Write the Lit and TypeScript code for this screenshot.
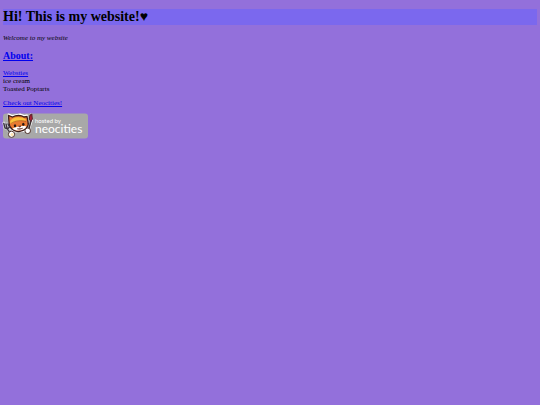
import { LitElement, html, css } from "lit";
import { customElement } from "lit/decorators.js";

@customElement("neocities-badge")
class NeocitiesBadge extends LitElement {
  static styles = css`
    :host { display: block; }
    svg { display: block; width: 85px; height: 26px; overflow: visible; }
    text { font-family: Lato, "Open Sans", sans-serif; fill: #fff; }
    .small { font-size: 6px; }
    .name { font-size: 12px; }
  `;
  render() {
    return html`
      <svg viewBox="0 0 85 26" role="img" aria-label="Hosted by Neocities">
        <rect x="0" y="0.5" width="85" height="25" rx="3" fill="#a8a8a8" />
        <g stroke="#fff" stroke-width="2" stroke-linejoin="round" stroke-linecap="round" fill="#fff">
          <path d="M6 9 L5.5 1.5 L9 3 L17 1.5 L21 3 L24 2.5 L25 12 L21 18 L11 18.5 L7 15 Z" />
          <path d="M28 1.5 L29 7 L26 16" />
        </g>
        <path d="M0.8 10 L2 15 L5 16 L7 14 L5 11 M3 11 L4.5 16 L8 21" fill="none" stroke="#dcdce2" stroke-width="2.8" stroke-linecap="round" />
        <path d="M6 10 L5.5 2.5 L9.5 4 C13 2 18 2 21 4 L24 3.5 L25 9 C26.5 13 22 18 16 18.5 C11 19 6 15 6 10Z" fill="#e87a31" stroke="#3b1c18" stroke-width="1.3" />
        <path d="M7 9 C8 4 18 2.5 23 6.5 L22.5 8 C18 7 11 8 8 11Z" fill="#fbc23c" />
        <path d="M8 10.5 C12 7.5 18 7 23 8.5" fill="none" stroke="#a8571f" stroke-width="0.7" />
        <path d="M9.5 15.5 C13 13.5 20 12.5 23.5 13.5 C21.5 18 13 19 9.5 15.5Z" fill="#fff" />
        <ellipse cx="12" cy="12.8" rx="1.2" ry="1.5" fill="#281815" />
        <ellipse cx="20.3" cy="11.2" rx="1.2" ry="1.5" fill="#281815" />
        <path d="M15.5 13.2 L18 12.8 L17 14.2Z M14 15.8 Q17 17.2 20 15" fill="#643126" stroke="#643126" stroke-width="0.6" />
        <path d="M0.8 10.5 L2 15 L4.5 16 L6.5 14 L5 11 M3 11 L4.2 15.8 L8 21" fill="none" stroke="#3c3540" stroke-width="1.4" stroke-linecap="round" />
        <path d="M28 8 L25.8 16" fill="none" stroke="#3c3030" stroke-width="1.5" />
        <path d="M27 2 L28.8 1 L29.4 6 L28 8.5 L26.3 6Z" fill="#b32036" stroke="#4b2028" stroke-width="1" />
        <circle cx="8.5" cy="21.3" r="3.1" fill="#fff" stroke="#51362e" stroke-width="1" />
        <circle cx="9" cy="21.6" r="1.5" fill="#ffe4b2" />
        <circle cx="24.7" cy="17.8" r="2.8" fill="#fff" stroke="#51362e" stroke-width="1" />
        <text class="small" x="32" y="10">hosted by</text>
        <text class="name" x="32" y="20">neocities</text>
      </svg>
    `;
  }
}

@customElement("app-root")
class AppRoot extends LitElement {
  static styles = css`
    :host {
      display: block;
      box-sizing: border-box;
      min-height: 100vh;
      padding: 9px 3px;
      background: #9370db;
      color: #000;
      font: 7px/8px "Liberation Serif", "Times New Roman", serif;
    }
    h1, h2, p { margin: 0; }
    h1 { background: #7b68ee; font-size: 14px; line-height: 16px; }
    h2 { margin: 8px 0 7px; font-size: 10px; line-height: 12px; }
    a { color: #00e; }
    .welcome { margin-top: 9px; font-style: italic; }
    .neocities { margin: 6px 0; }
    .badge { display: inline-block; }
  `;
  render() {
    return html`
      <h1>Hi! This is my website!♥</h1>
      <p class="welcome">Welcome to my website</p>
      <h2><a href="#about">About:</a></h2>
      <div><a href="#websites">Websties</a></div>
      <div>ice cream</div>
      <div>Toasted Poptarts</div>
      <p class="neocities"><a href="https://neocities.org">Check out Neocities!</a></p>
      <a class="badge" href="https://neocities.org"><neocities-badge></neocities-badge></a>
    `;
  }
}
